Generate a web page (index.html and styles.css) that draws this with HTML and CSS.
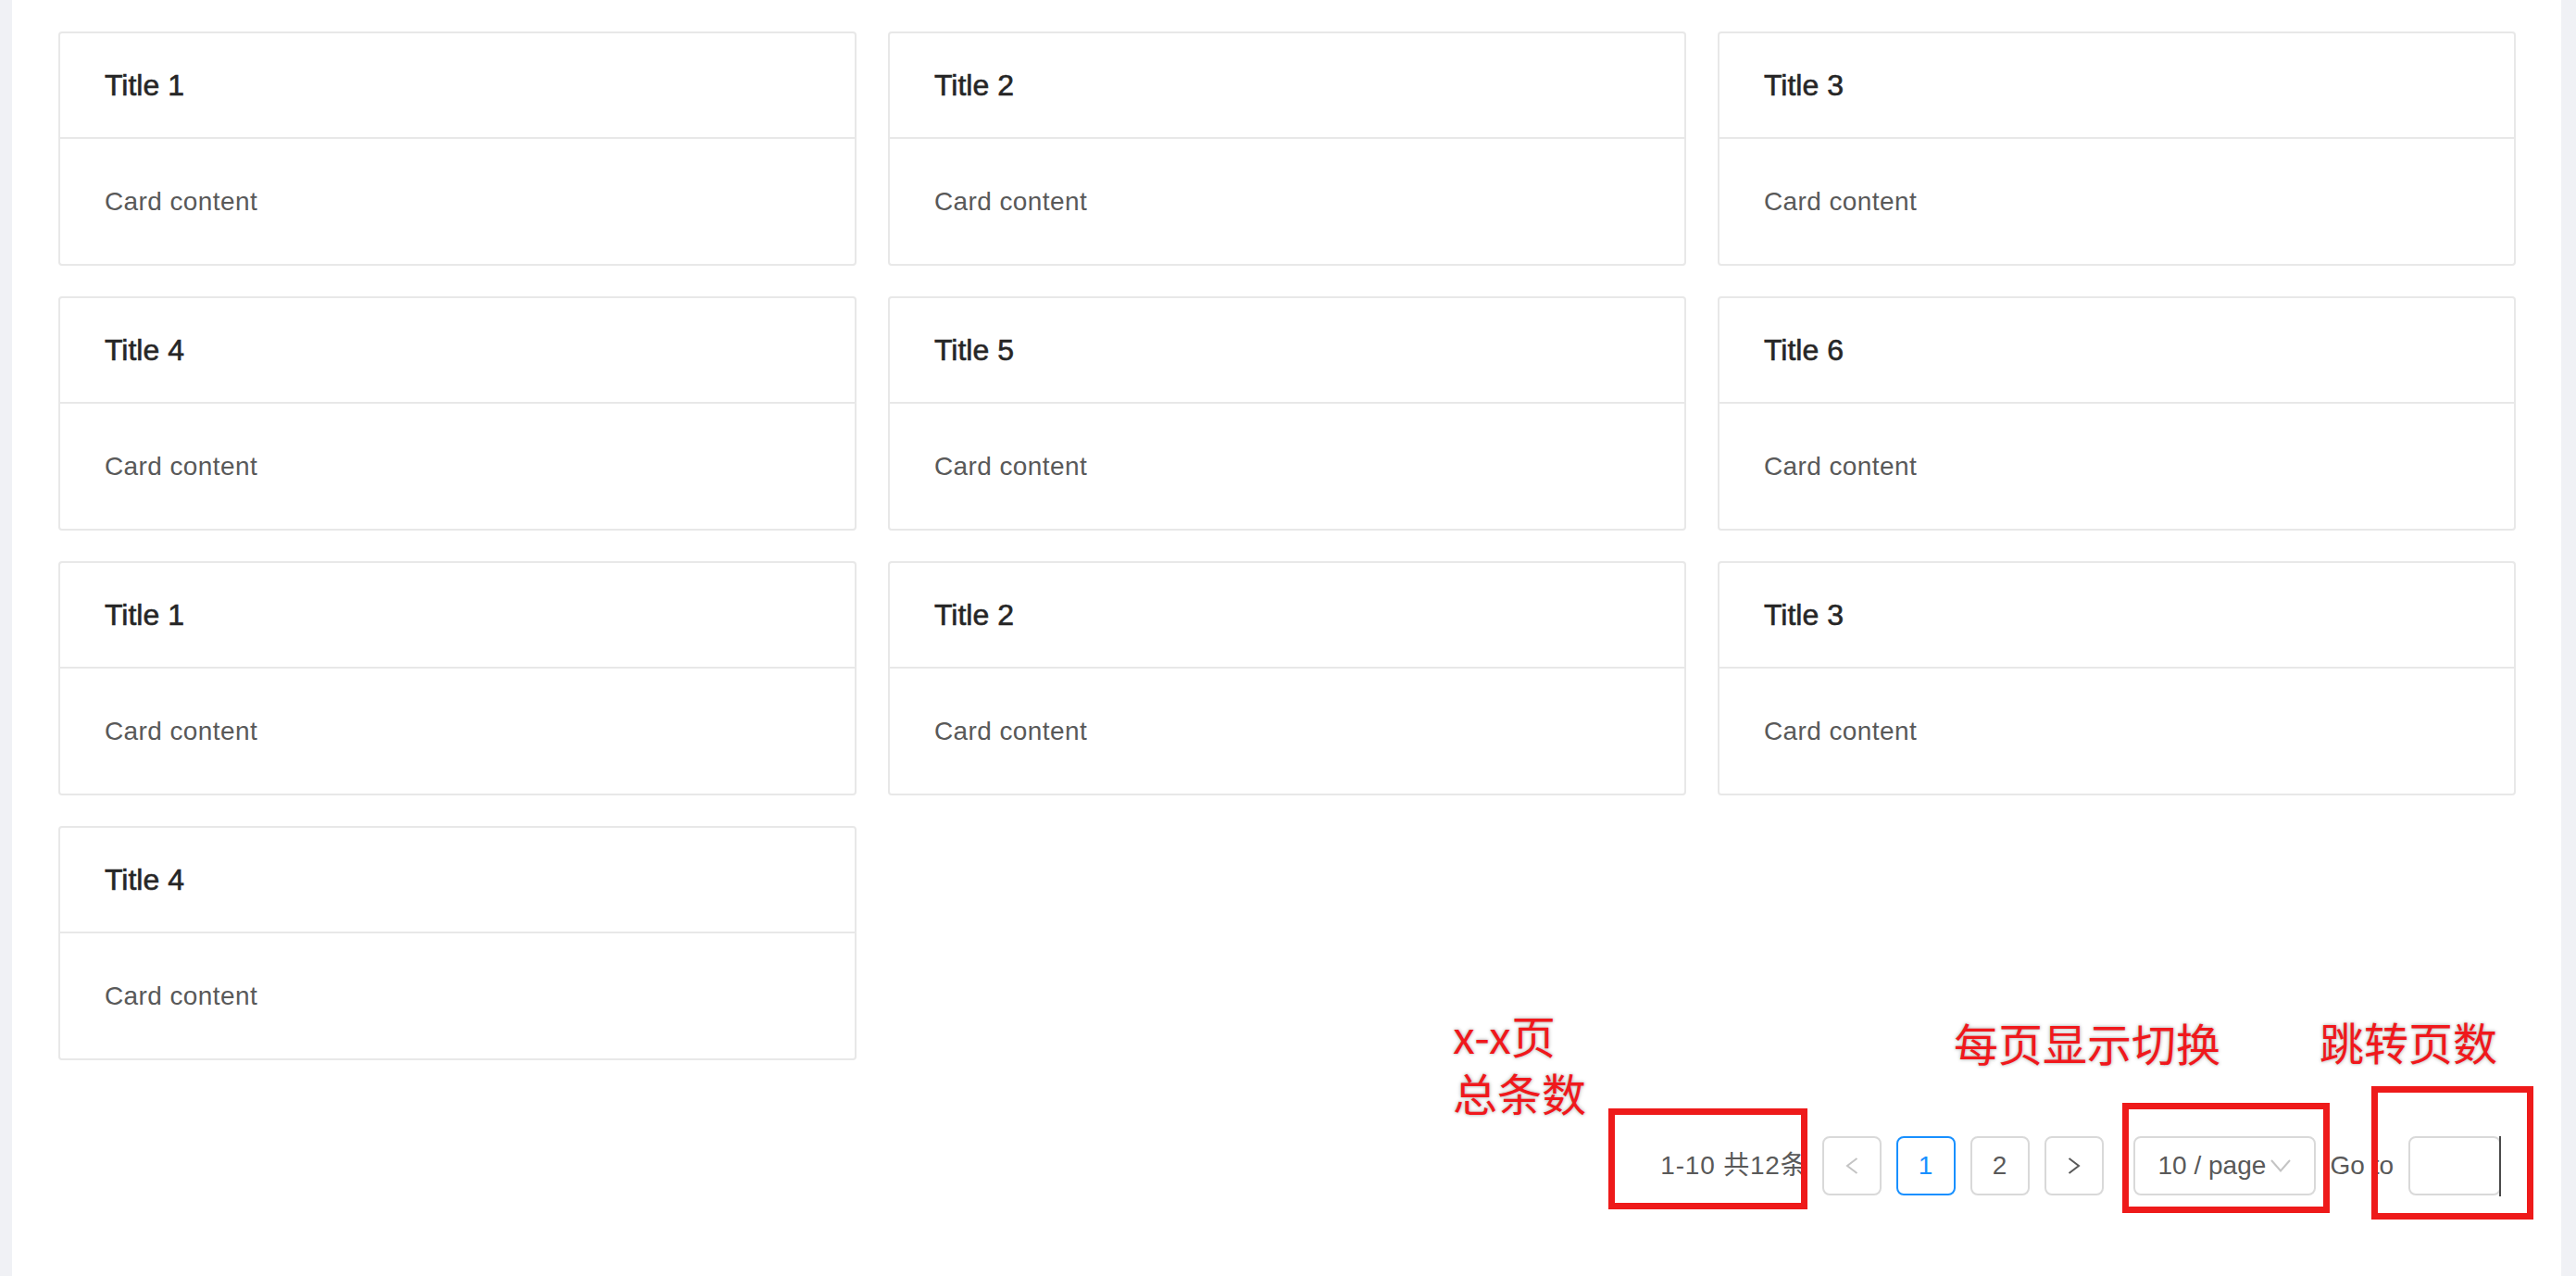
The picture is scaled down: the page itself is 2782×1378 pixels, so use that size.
FILE: index.html
```html
<!DOCTYPE html>
<html lang="zh-CN">
<head>
<meta charset="utf-8">
<title>Card list</title>
<link rel="stylesheet" href="styles.css">
</head>
<body>
<div class="page">
  <div class="grid">
    <div class="card"><div class="card-head">Title 1</div><div class="card-body">Card content</div></div>
    <div class="card"><div class="card-head">Title 2</div><div class="card-body">Card content</div></div>
    <div class="card"><div class="card-head">Title 3</div><div class="card-body">Card content</div></div>
    <div class="card"><div class="card-head">Title 4</div><div class="card-body">Card content</div></div>
    <div class="card"><div class="card-head">Title 5</div><div class="card-body">Card content</div></div>
    <div class="card"><div class="card-head">Title 6</div><div class="card-body">Card content</div></div>
    <div class="card"><div class="card-head">Title 1</div><div class="card-body">Card content</div></div>
    <div class="card"><div class="card-head">Title 2</div><div class="card-body">Card content</div></div>
    <div class="card"><div class="card-head">Title 3</div><div class="card-body">Card content</div></div>
    <div class="card"><div class="card-head">Title 4</div><div class="card-body">Card content</div></div>
  </div>

  <div class="pagination">
    <span class="total">1-10 共12条</span>
    <button class="pg-btn disabled" aria-label="prev"><svg width="14" height="18" viewBox="0 0 14 18"><path d="M12.5 1 L2 9 L12.5 17" fill="none" stroke="#c4c4c4" stroke-width="2"/></svg></button>
    <button class="pg-btn active">1</button>
    <button class="pg-btn">2</button>
    <button class="pg-btn" aria-label="next"><svg width="14" height="18" viewBox="0 0 14 18"><path d="M1.5 1 L12 9 L1.5 17" fill="none" stroke="#595959" stroke-width="2"/></svg></button>
    <div class="select"><span>10 / page</span><svg width="22" height="14" viewBox="0 0 22 14"><path d="M1 1 L11 12.5 L21 1" fill="none" stroke="#c4c4c4" stroke-width="2"/></svg></div>
    <div class="jumper"><span>Go to</span><span class="jump-input"></span></div>
  </div>

  <div class="note note-range">x-x页<br>总条数</div>
  <div class="note note-size">每页显示切换</div>
  <div class="note note-jump">跳转页数</div>
  <div class="mark mark-total"></div>
  <div class="mark mark-size"></div>
  <div class="mark mark-jump"></div>
</div>
</body>
</html>
```

FILE: styles.css
```css
* { box-sizing: border-box; }

html, body {
  margin: 0;
  height: 100%;
}

body {
  background: #f0f1f5;
  font-family: "Liberation Sans", "Noto Sans CJK SC", sans-serif;
}

.page {
  position: relative;
  background: #fff;
  margin: 0 16px 0 13px;
  min-height: 100%;
  padding: 34px 49px 0 50px;
}

.grid {
  display: grid;
  grid-template-columns: repeat(3, 862px);
  column-gap: 34px;
  row-gap: 33px;
}

.card {
  border: 2px solid #e8e8e8;
  border-radius: 4px;
  background: #fff;
}

.card-head {
  height: 114px;
  border-bottom: 2px solid #e8e8e8;
  padding: 0 48px;
  display: flex;
  align-items: center;
  font-size: 32px;
  color: #262626;
  -webkit-text-stroke: 0.6px #262626;
}

.card-body {
  height: 135px;
  padding: 0 48px;
  display: flex;
  align-items: center;
  font-size: 28px;
  color: #595959;
  letter-spacing: 0.4px;
}

.pagination {
  display: flex;
  justify-content: flex-end;
  align-items: center;
  margin-top: 82px;
  height: 64px;
  font-size: 28px;
  color: #595959;
}

.total {
  margin-right: 16px;
  line-height: 64px;
  letter-spacing: 0.8px;
}

.pg-btn {
  width: 64px;
  height: 64px;
  margin: 0 16px 0 0;
  padding: 0;
  border: 2px solid #d9d9d9;
  border-radius: 8px;
  background: #fff;
  display: flex;
  align-items: center;
  justify-content: center;
  font: inherit;
  color: #595959;
}

.pg-btn.active {
  border-color: #1890ff;
  color: #1890ff;
}

.select {
  margin-left: 16px;
  width: 197px;
  height: 64px;
  border: 2px solid #d9d9d9;
  border-radius: 8px;
  display: flex;
  align-items: center;
  gap: 5px;
  padding-left: 25px;
}

.jumper {
  margin-left: 16px;
  display: flex;
  align-items: center;
}

.jump-input {
  position: relative;
  width: 100px;
  height: 64px;
  margin: 0 16px;
  border: 2px solid #d9d9d9;
  border-radius: 8px;
}

.jump-input::after {
  content: "";
  position: absolute;
  right: -2px;
  top: -2px;
  bottom: -3px;
  width: 2px;
  background: #4a4a4a;
}

/* annotations */
.note {
  position: absolute;
  font-family: "Noto Sans CJK SC", sans-serif;
  font-size: 48px;
  line-height: 48px;
  color: #f0181c;
  white-space: nowrap;
  text-shadow: 0 0 3px #b8b8b8, 0 0 5px #d0d0d0;
}

.note-range { left: 1556px; top: 1086px; line-height: 62px; }
.note-size  { left: 2097px; top: 1101px; }
.note-jump  { left: 2492px; top: 1100px; }

.mark {
  position: absolute;
  border: 7px solid #ee1a1a;
}

.mark-total { left: 1724px; top: 1197px; width: 215px; height: 109px; }
.mark-size  { left: 2279px; top: 1191px; width: 224px; height: 119px; }
.mark-jump  { left: 2548px; top: 1173px; width: 175px; height: 144px; }
```
